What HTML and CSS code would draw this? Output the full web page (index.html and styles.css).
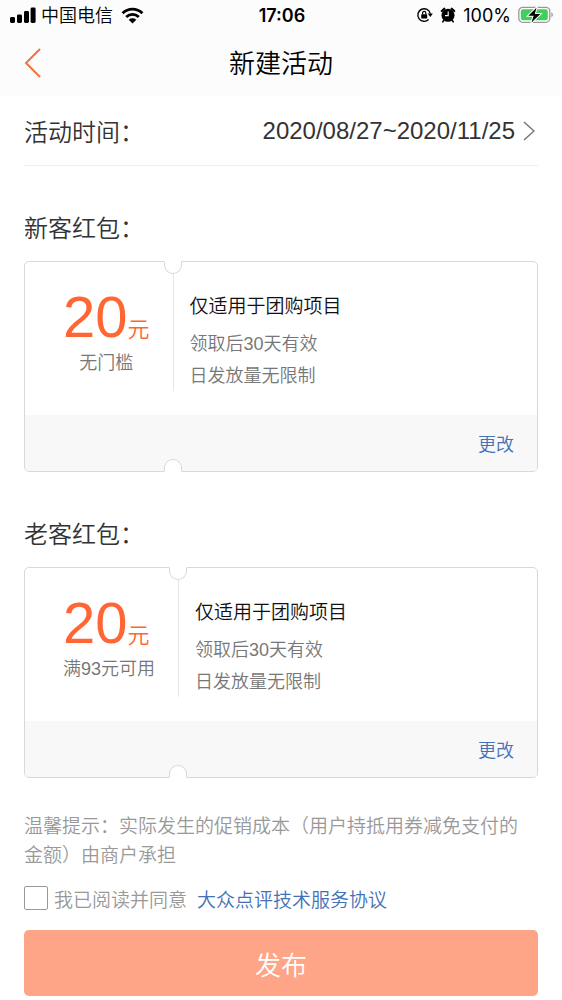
FILE: index.html
```
<!DOCTYPE html>
<html lang="zh-CN">
<head>
<meta charset="utf-8">
<meta name="viewport" content="width=device-width, initial-scale=1">
<title>新建活动</title>
<link rel="stylesheet" href="styles.css">
</head>
<body>
<header class="top">
  <div class="status">
    <div class="status-left">
      <svg class="signal" width="26" height="16" viewBox="0 0 26 16" aria-hidden="true">
        <rect x="0" y="10" width="5" height="6" rx="1.4"/><rect x="7" y="7.500" width="5" height="8.500" rx="1.400"/><rect x="14" y="4" width="5" height="12" rx="1.400"/><rect x="20.600" y="0.500" width="5" height="15.500" rx="1.400"/>
      </svg>
      <span class="carrier">中国电信</span>
      <svg class="wifi" width="23" height="17" viewBox="0 0 23 17" aria-hidden="true">
        <path d="M1.600 6.200C7.200.7 15.800.7 21.400 6.200M5.200 10C8.900 6.500 14.100 6.500 17.800 10" fill="none" stroke="#000" stroke-width="2.900"/>
        <path d="M7.700 12.700c2.300-1.900 5.300-1.900 7.600 0L11.500 16.500z"/>
      </svg>
    </div>
    <time class="clock">17:06</time>
    <div class="status-right">
      <svg width="17" height="16" viewBox="0 0 17 16" aria-hidden="true">
        <path d="M14.300 6.600A6.300 6.300 0 1 0 12.600 12.500" fill="none" stroke="#000" stroke-width="1.400"/>
        <path d="M11.600 6.600h5.200L14.400 10z"/>
        <rect x="5.200" y="7.200" width="6" height="4.300" rx=".6"/>
        <path d="M6.600 7.200V6a1.600 1.600 0 0 1 3.200 0V7.200" fill="none" stroke="#000" stroke-width="1.200"/>
      </svg>
      <svg width="16" height="16" viewBox="0 0 16 16" aria-hidden="true">
        <circle cx="8" cy="8.300" r="6.500"/>
        <path d="M1.800 4 4.300 1.700M14.200 4 11.700 1.700" stroke="#000" stroke-width="2.200" stroke-linecap="round"/>
        <path d="M3.900 13 2.800 14.800M12.100 13l1.100 1.800" stroke="#000" stroke-width="1.600" stroke-linecap="round"/>
        <path d="M8.200 4.600v4H5" fill="none" stroke="#fff" stroke-width="1.100"/>
      </svg>
      <span class="percent">100%</span>
      <svg class="battery" width="36" height="18" viewBox="0 0 36 18" aria-hidden="true">
        <rect x=".8" y="1.300" width="31" height="15" rx="4" fill="#fff" stroke="#999" stroke-width="1.300"/>
        <rect x="2.800" y="3.300" width="27" height="11" rx="2.200" fill="#3fcf5b"/>
        <path d="M33.400 6.300c1.900.9 1.900 4.100 0 5z" fill="#999"/>
        <path class="bolt" d="M18.500 1.800 10.300 9.800h5.300l-2 6.600L22.300 8h-5.500z"/>
      </svg>
    </div>
  </div>
  <div class="nav">
    <button class="back" type="button" aria-label="返回">
      <svg width="18" height="32" viewBox="0 0 18 32" aria-hidden="true"><path d="M16 2 2 16 16 30" fill="none" stroke="#f4733f" stroke-width="2"/></svg>
    </button>
    <h1 class="nav-title">新建活动</h1>
  </div>
</header>

<main class="page">
  <div class="period">
    <span id="period-label">活动时间：</span>
    <button class="period-value" type="button" aria-describedby="period-label">2020/08/27~2020/11/25
      <svg width="12" height="20" viewBox="0 0 12 20" aria-hidden="true"><path d="M1 1l10 9L1 19" fill="none" stroke="#777" stroke-width="1.500"/></svg>
    </button>
  </div>

  <section class="group">
    <h2 class="group-title">新客红包：</h2>
    <article class="coupon">
      <div class="worth">
        <p class="price">20<span class="unit">元</span></p>
        <p class="condition">无门槛</p>
      </div>
      <div class="detail">
        <h3 class="scope">仅适用于团购项目</h3>
        <p class="rule">领取后30天有效</p>
        <p class="rule">日发放量无限制</p>
      </div>
      <div class="actions"><button class="edit" type="button">更改</button></div>
      <i class="notch notch-top"></i>
      <i class="notch notch-bottom"></i>
    </article>
  </section>

  <section class="group">
    <h2 class="group-title">老客红包：</h2>
    <article class="coupon">
      <div class="worth">
        <p class="price">20<span class="unit">元</span></p>
        <p class="condition">满93元可用</p>
      </div>
      <div class="detail">
        <h3 class="scope">仅适用于团购项目</h3>
        <p class="rule">领取后30天有效</p>
        <p class="rule">日发放量无限制</p>
      </div>
      <div class="actions"><button class="edit" type="button">更改</button></div>
      <i class="notch notch-top"></i>
      <i class="notch notch-bottom"></i>
    </article>
  </section>

  <p class="tips">温馨提示：实际发生的促销成本（用户持抵用券减免支付的金额）由商户承担</p>
  <div class="agree">
    <input class="agree-box" type="checkbox" id="agree">
    <label for="agree">我已阅读并同意</label>
    <a class="agree-link" href="#">大众点评技术服务协议</a>
  </div>
  <button class="publish" type="button">发布</button>
</main>
</body>
</html>
```
FILE: styles.css
```
* {
  box-sizing: border-box;
}

body,
h1,
h2,
h3,
p {
  margin: 0;
  font-weight: 350;
}

body {
  background: #fff;
  color: #333;
  font-family: "Liberation Sans", "Noto Sans CJK SC", sans-serif;
}

button {
  padding: 0;
  border: 0;
  background: none;
  color: inherit;
  font: inherit;
  cursor: pointer;
}

svg {
  display: block;
  flex: none;
}

/* Status bar and navigation */
.top {
  background: #fcfcfc;
  color: #000;
}

.status {
  display: grid;
  grid-template-columns: 1fr auto 1fr;
  align-items: center;
  height: 30px;
  padding: 0 8px 0 10px;
}

.status-left,
.status-right {
  display: flex;
  align-items: center;
}

.status-left {
  gap: 5px;
}

.status-right {
  justify-content: flex-end;
  gap: 7px;
}

.wifi {
  margin-left: 3px;
}

.carrier {
  padding-top: 2px;
  font-size: 18px;
  line-height: 28px;
}

.clock,
.percent {
  padding-top: 2px;
  font-family: Inter, "Liberation Sans", sans-serif;
  font-size: 18px;
  font-weight: 400;
  line-height: 28px;
}

.clock {
  font-weight: 600;
}

.bolt {
  stroke: #fff;
  stroke-width: 2px;
  paint-order: stroke;
}

.nav {
  display: grid;
  grid-template-columns: 1fr auto 1fr;
  align-items: center;
  height: 66px;
  padding: 0 24px;
}

.back {
  justify-self: start;
}

.nav-title {
  padding-top: 2px;
  font-size: 26px;
  line-height: 36px;
}

.page {
  padding: 0 24px 4px;
}

.period {
  display: flex;
  align-items: center;
  justify-content: space-between;
  height: 70px;
  border-bottom: 1px solid #f0f0f0;
  font-size: 24px;
}

.period-value {
  display: flex;
  align-items: center;
  gap: 8px;
  padding-right: 3px;
}

/* Coupons */
.group {
  padding-top: 45px;
}

.group-title {
  margin-bottom: 14px;
  font-size: 24px;
  line-height: 36px;
}

.coupon {
  position: relative;
  display: grid;
  grid-template-columns: auto 1fr;
  border: 1px solid #d8d8d8;
  border-radius: 5px;
}

.worth {
  padding: 24px 23px 0 38px;
}

.price {
  height: 62px;
  color: #ff6633;
  font-size: 58px;
  line-height: 62px;
}

.unit {
  font-size: 22px;
  line-height: 30px;
}

.condition {
  color: #777;
  font-size: 18px;
  line-height: 30px;
  text-align: center;
}

.detail {
  margin-bottom: 24px;
  padding: 30px 16px 0;
  border-left: 1px solid #e8e8e8;
}

.scope {
  margin-bottom: 7px;
  color: #111;
  font-size: 19px;
  line-height: 30px;
}

.rule {
  color: #777;
  font-size: 18px;
  line-height: 30px;
}

.rule + .rule {
  margin-top: 2px;
}

.actions {
  grid-column: 1 / -1;
  display: flex;
  justify-content: flex-end;
  align-items: center;
  height: 56px;
  padding: 4px 23px 0;
  border-radius: 0 0 4px 4px;
  background: #f8f8f8;
}

.edit {
  color: #4472b8;
  font-size: 18px;
  line-height: 30px;
}

.notch {
  position: absolute;
  left: -9px;
  grid-column: 2;
  grid-row: 1 / 3;
  width: 18px;
  height: 13px;
  border: 1px solid #d8d8d8;
  background: #fff;
}

.notch-top {
  top: -1px;
  border-top-color: #fff;
  border-radius: 0 0 9px 9px;
}

.notch-bottom {
  bottom: -1px;
  border-bottom-color: #fff;
  border-radius: 9px 9px 0 0;
}

/* Terms and submit */
.tips {
  margin-top: 34px;
  padding-right: 8px;
  color: #999;
  font-size: 19px;
  line-height: 29px;
}

.agree {
  display: flex;
  align-items: center;
  margin: 13px 0 11px;
  color: #999;
  font-size: 19px;
  line-height: 36px;
}

.agree-box {
  appearance: none;
  width: 24px;
  height: 24px;
  margin: 0 6px 6px 0;
  border: 1px solid #999;
  border-radius: 2px;
  background: #fff;
}

.agree-box:checked {
  background: #ff6633;
}

.agree-link {
  margin-left: 10px;
  color: #4472b8;
  text-decoration: none;
}

.publish {
  display: block;
  width: 100%;
  height: 66px;
  border-radius: 5px;
  background: #ffa587;
  color: #fff;
  font-size: 26px;
}
```
